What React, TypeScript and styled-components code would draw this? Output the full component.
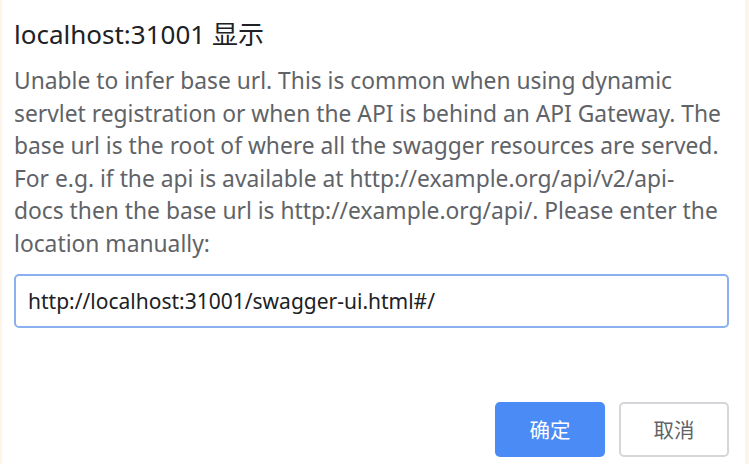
import React from "react";
import styled, { createGlobalStyle } from "styled-components";

const Global = createGlobalStyle`
  html, body { margin: 0; padding: 0; background: #fdf6e8; }
  * { box-sizing: border-box; }
`;

const Page = styled.div`
  width: 749px;
  height: 464px;
  display: flex;
  padding-left: 2px;
  padding-right: 4px;
  background: #fdf6e8;
`;

const Dialog = styled.div`
  flex: 1;
  background: #ffffff;
  display: flex;
  flex-direction: column;
  padding: 18px 16px 0 12px;
  font-family: "Segoe UI", "Noto Sans", "Noto Sans CJK SC", sans-serif;
`;

const Title = styled.div`
  font-size: 26px;
  line-height: 32px;
  color: #202124;
  margin-bottom: 15px;
`;

const Message = styled.div`
  font-size: 22.8px;
  line-height: 32.6px;
  color: #5f6368;
`;

const Line = styled.div`
  white-space: nowrap;
`;

const UrlInput = styled.input`
  margin-top: 13px;
  width: 715px;
  height: 54px;
  border: 2px solid #8ab0f2;
  border-radius: 5px;
  padding: 0 12px;
  font-family: "Segoe UI", "Noto Sans", "Noto Sans CJK SC", sans-serif;
  font-size: 21px;
  color: #202124;
  outline: none;
`;

const Actions = styled.div`
  display: flex;
  justify-content: flex-end;
  gap: 14px;
  margin-top: 74px;
  width: 715px;
`;

const Button = styled.button<{ $primary?: boolean }>`
  width: 110px;
  height: 55px;
  border-radius: 5px;
  font-family: "Noto Sans CJK SC", sans-serif;
  font-size: 20.5px;
  cursor: pointer;
  background: ${(p) => (p.$primary ? "#4b8bf5" : "#ffffff")};
  color: ${(p) => (p.$primary ? "#ffffff" : "#5f6368")};
  border: ${(p) => (p.$primary ? "none" : "2px solid #d4d6da")};
`;

const lines = [
  "Unable to infer base url. This is common when using dynamic",
  "servlet registration or when the API is behind an API Gateway. The",
  "base url is the root of where all the swagger resources are served.",
  "For e.g. if the api is available at http://example.org/api/v2/api-",
  "docs then the base url is http://example.org/api/. Please enter the",
  "location manually:",
];

export default function App() {
  return (
    <>
      <Global />
      <Page>
        <Dialog>
          <Title>localhost:31001 显示</Title>
          <Message>
            {lines.map((l) => (
              <Line key={l}>{l}</Line>
            ))}
          </Message>
          <UrlInput defaultValue="http://localhost:31001/swagger-ui.html#/" />
          <Actions>
            <Button $primary>确定</Button>
            <Button>取消</Button>
          </Actions>
        </Dialog>
      </Page>
    </>
  );
}
